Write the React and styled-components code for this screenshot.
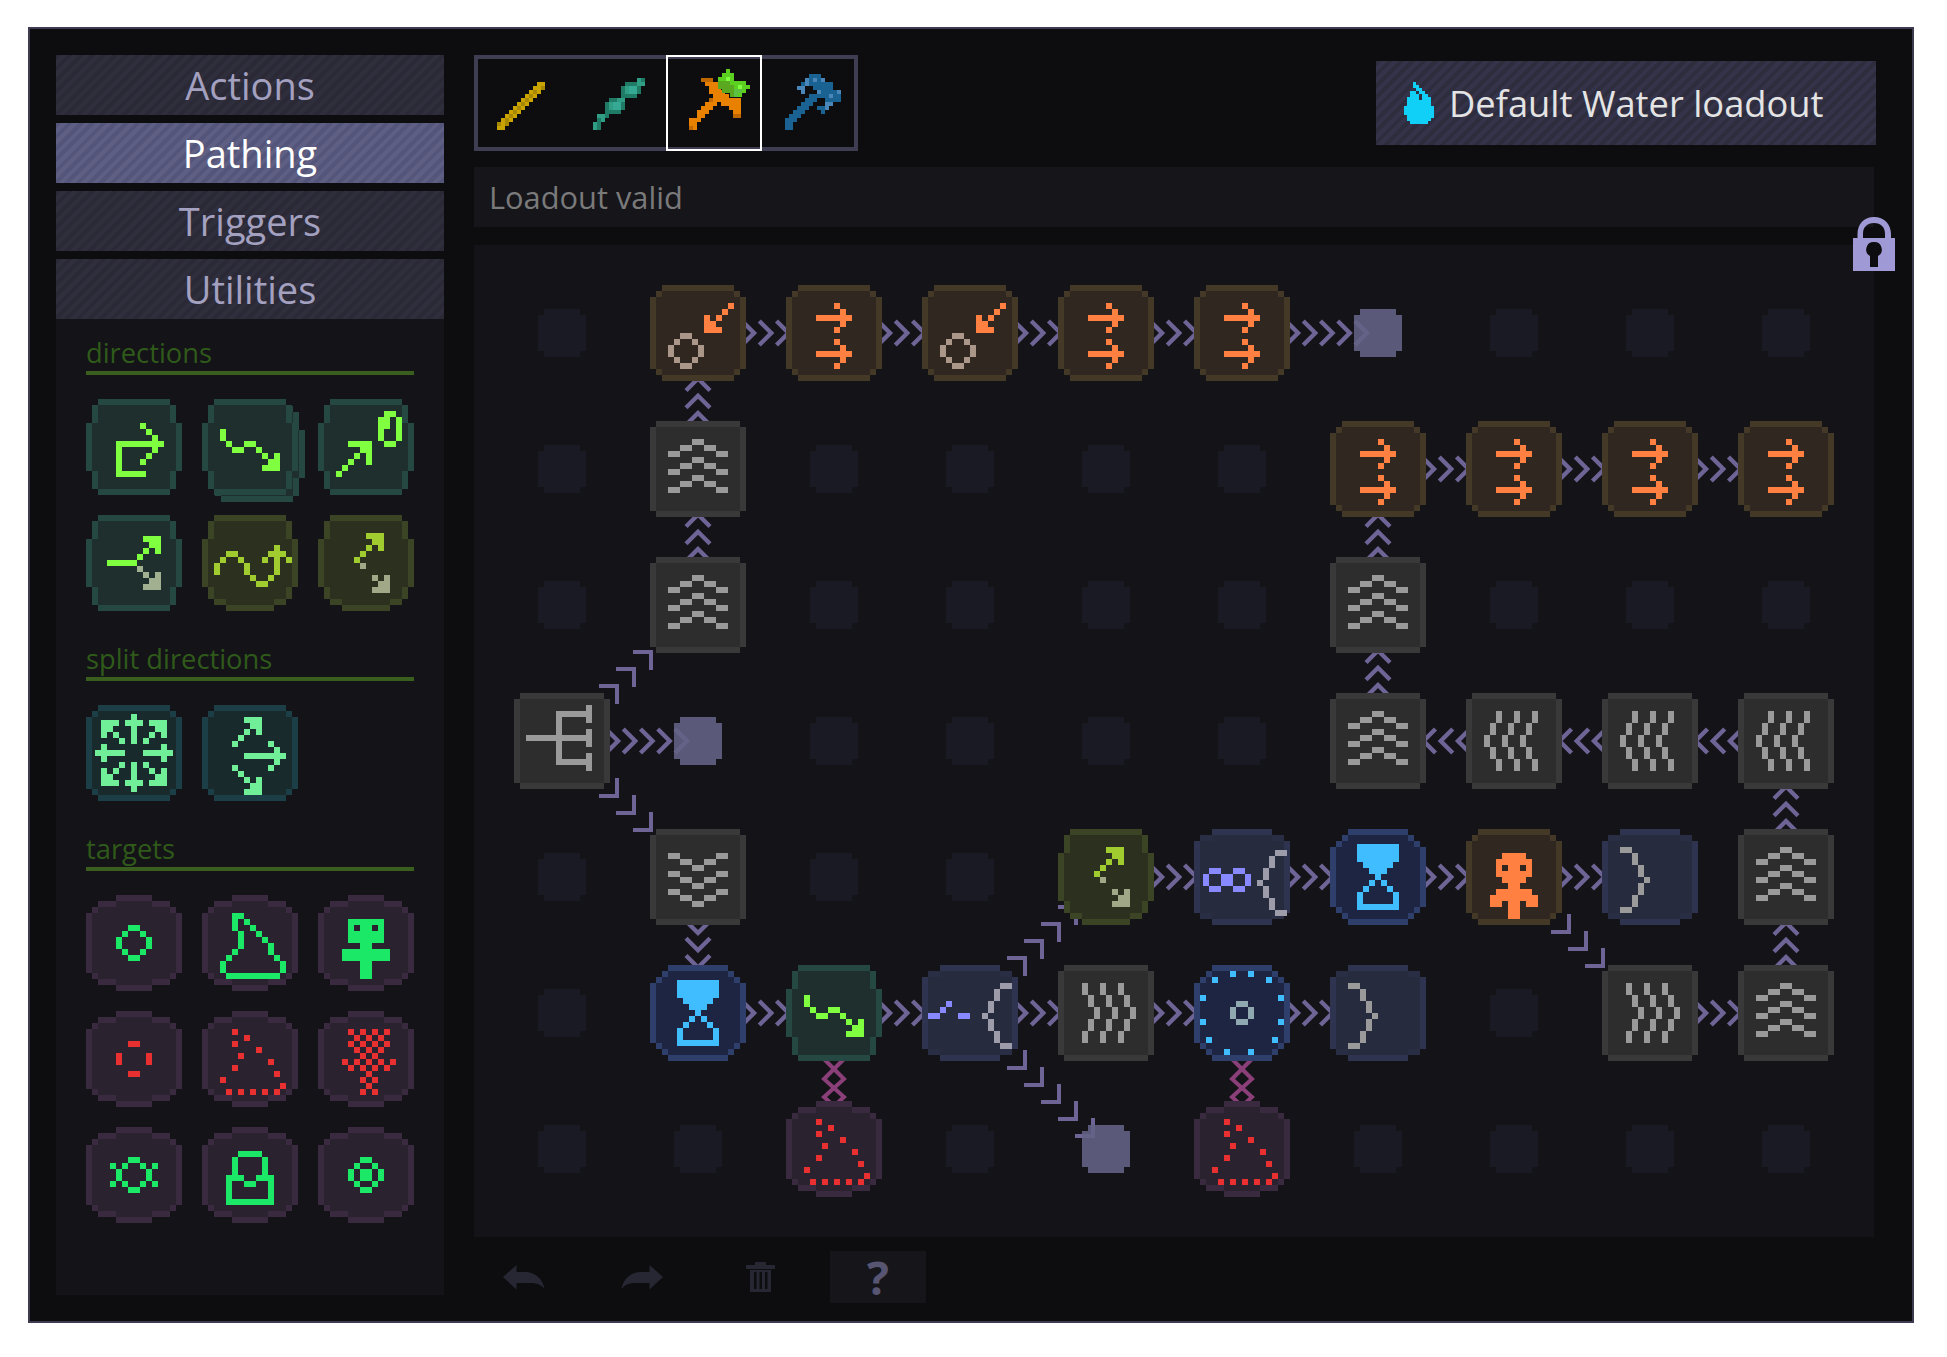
import React from "react";
import styled, { createGlobalStyle } from "styled-components";

const GlobalStyle = createGlobalStyle`
  html, body { margin: 0; background: #fff; }
  #root { padding: 27px 0 0 28px; font-family: "Open Sans", "Noto Sans", sans-serif; }
`;

const rep = (row, n) => Array(n).fill(row);

/* ---------- frames, all on a 16x16 grid at 6px ---------- */
const FRAMES = {
  square: [".oooooooooooooo.", ...rep("offffffffffffffo", 14), ".oooooooooooooo."],
  rounded: [
    "..oooooooooooo..",
    ".offffffffffffo.",
    ...rep("offffffffffffffo", 12),
    ".offffffffffffo.",
    "..oooooooooooo..",
  ],
  chamfer: [
    "..oooooooooooo..",
    ...rep(".offffffffffffo.", 3),
    ...rep("offffffffffffffo", 8),
    ...rep(".offffffffffffo.", 3),
    "..oooooooooooo..",
  ],
  olive: [
    "..oooooooooooo..",
    ...rep(".offffffffffffo.", 3),
    ...rep("offffffffffffffo", 8),
    ...rep(".offffffffffffo.", 2),
    "..ooffffffffoo..",
    "....oooooooo....",
  ],
  octagon: [
    "...oooooooooo...",
    "..offffffffffo..",
    ".offffffffffffo.",
    ...rep("offffffffffffffo", 10),
    ".offffffffffffo.",
    "..offffffffffo..",
    "...oooooooooo...",
  ],
  slate: [
    "...oooooooooo...",
    ".mmffffffffffmm.",
    ...rep("offffffffffffffo", 12),
    ".mmffffffffffmm.",
    "...oooooooooo...",
  ],
  disc: [
    ".....oooooo.....",
    "..oooffffffooo..",
    ".offffffffffffo.",
    ...rep("offffffffffffffo", 10),
    ".offffffffffffo.",
    "..oooffffffooo..",
    ".....oooooo.....",
  ],
};

const TONES = {
  grey: { o: "#393939", f: "#2d2d2d" },
  orange: { o: "#443826", f: "#302820" },
  green: { o: "#264842", f: "#1f2f2e" },
  olive: { o: "#3c4426", f: "#2c301e" },
  slate: { o: "#2e3450", f: "#272b3e", m: "#2a2e45" },
  blue: { o: "#2e3f6b", f: "#1e2542" },
  teal: { o: "#1c3f47", f: "#182a2c" },
  plum: { o: "#392a40", f: "#2a222e" },
};

/* ---------- glyphs ---------- */
const arrows = ["...#..", "....#.", "######", "....#.", "...#.."];
const chevUp = rep(["....##....", "..##..##..", "##......##"], 3).flat();
const chevRight = [
  "#..#..#..", "#..#..#..", ".#..#..#.", ".#..#..#.", "..#..#..#", "..#..#..#",
  ".#..#..#.", ".#..#..#.", "#..#..#..", "#..#..#..",
];
const flipH = (rows) => rows.map((r) => r.split("").reverse().join(""));
const bracketOpen = [
  "...##", "..#..", "..#..", ".#...", ".#...", "#....", ".#...", ".#...", "..#..", "..#..", "...##",
];
const ring = ["..##..", ".#..#.", "#....#", "#....#", ".#..#.", "..##.."];

const GRAY = "#9a9a9a";
const ORANGE = "#ff8040";
const LIME = "#80ff40";
const YELLOW = "#a0cc30";
const SKY = "#40bdff";
const MINT = "#70ee98";
const GREEN = "#1ce868";
const RED = "#e83030";
const VIOLET = "#8888ff";

const waveLayer = {
  x: 3, y: 5,
  rows: ["#.........", "#.........", ".#..##....", "..##..#...", ".......#.#", "........##", ".......###"],
};
const forkArrowsLayer = {
  x: 6, y: 3,
  rows: ["..###.", "...##.", "..#.#.", ".#....", "#.....", ".+....", "......", "...+.+", "....++", "...+++"],
};
const hourglassLayer = {
  x: 4.5, y: 2.5,
  rows: ["#######", "#######", "#######", ".#####.", "..###..", "...#...", "..#.#..", ".#...#.", "#.....#", "#.....#", "#######"],
};

const SPRITES = {
  double: { frame: "rounded", tone: "orange", ink: ORANGE, layers: [{ x: 5, y: 3, rows: [...arrows, "......", ...arrows] }] },
  shoot: {
    frame: "rounded", tone: "orange", ink: ORANGE, muted: "#ab978a",
    layers: [{
      x: 3, y: 3,
      rows: ["..........#", ".........#.", "......#.#..", "......##...", "......###..", "..++.......", ".+..+......", "+....+.....", "+....+.....", ".+..+......", "..++......."],
    }],
  },
  up: { frame: "square", tone: "grey", ink: GRAY, layers: [{ x: 3, y: 3, rows: chevUp }] },
  down: { frame: "square", tone: "grey", ink: GRAY, layers: [{ x: 3, y: 4, rows: [...chevUp].reverse() }] },
  right: { frame: "square", tone: "grey", ink: GRAY, layers: [{ x: 4, y: 3, rows: chevRight }] },
  left: { frame: "square", tone: "grey", ink: GRAY, layers: [{ x: 3, y: 3, rows: flipH(chevRight) }] },
  fork: {
    frame: "square", tone: "grey", ink: GRAY,
    layers: [{
      x: 2, y: 2,
      rows: ["..........#", ".....######", ".....#....#", ".....#.....", ".....#....#", "###########", ".....#....#", ".....#.....", ".....#....#", ".....######", "..........#"],
    }],
  },
  hourglass: { frame: "octagon", tone: "blue", ink: SKY, layers: [hourglassLayer] },
  wave: { frame: "chamfer", tone: "green", ink: LIME, layers: [waveLayer] },
  boxArrow: {
    frame: "chamfer", tone: "green", ink: LIME,
    layers: [{ x: 5, y: 4, rows: ["....#...", ".....#..", "......#.", "########", "#.....#.", "#....#..", "#...#...", "#.......", "#####..."] }],
  },
  arrowZero: {
    frame: "chamfer", tone: "green", ink: LIME,
    layers: [{
      x: 3, y: 2,
      rows: ["........##.", ".......##.#", ".......##.#", ".......#..#", ".......#..#", "..####..##.", "....##.....", "...#.#.....", "..#..#.....", ".#.........", "#.........."],
    }],
  },
  splitArrow: {
    frame: "chamfer", tone: "green", ink: LIME, muted: "#a0b090",
    layers: [{ x: 3.5, y: 3.5, rows: ["......###", ".......##", "......#.#", ".....#...", "#####....", ".....+...", "......+.+", ".......++", "......+++"] }],
  },
  waveUp: {
    frame: "olive", tone: "olive", ink: YELLOW,
    layers: [{
      x: 2, y: 5,
      rows: ["..........#..", "..##.....###.", ".#..#...#.#.#", "#....#....#..", "#....#....#..", "......#..#...", ".......##...."],
    }],
  },
  forkArrows: { frame: "olive", tone: "olive", ink: YELLOW, muted: "#a0a888", layers: [forkArrowsLayer] },
  compass: {
    frame: "rounded", tone: "teal", ink: MINT,
    layers: [{
      x: 1.5, y: 1.5,
      rows: ["......#......", ".###.###.###.", ".##...#...##.", ".#.#..#..#.#.", "....#.#.#....", ".#.........#.", "#####...#####", ".#.........#.", "....#.#.#....", ".#.#..#..#.#.", ".##...#...##.", ".###.###.###.", "......#......"],
    }],
  },
  fan: {
    frame: "rounded", tone: "teal", ink: MINT,
    layers: [{
      x: 5, y: 2,
      rows: ["..###....", "...##....", "..#.#....", ".#.......", "#.....#..", ".......#.", "..#######", ".......#.", "#.....#..", ".#.......", "..#.#....", "...##....", "..###...."],
    }],
  },
  circle: { frame: "disc", tone: "plum", ink: GREEN, layers: [{ x: 5, y: 5, rows: ring }] },
  triangle: {
    frame: "disc", tone: "plum", ink: GREEN,
    layers: [{
      x: 3, y: 3,
      rows: ["..##.......", "..#.#......", "..#..#.....", "...#..#....", "...#...#...", "...#....#..", "..#.....#..", ".#.......#.", "#.........#", "#.........#", ".#########."],
    }],
  },
  figure: {
    frame: "disc", tone: "plum", ink: GREEN,
    layers: [{ x: 4, y: 4, rows: [".######.", ".#.##.#.", ".######.", ".######.", "...##...", "########", "########", "...##...", "...##...", "...##..."] }],
  },
  dashCircle: { frame: "disc", tone: "plum", ink: RED, layers: [{ x: 5, y: 5, rows: ["..##..", "......", "#....#", "#....#", "......", "..##.."] }] },
  dotTriangle: {
    frame: "disc", tone: "plum", ink: RED,
    layers: [{
      x: 3, y: 3,
      rows: ["..#........", "....#......", "..#........", "......#....", "...#.......", "........#..", "..#........", ".........#.", "#..........", "..........#", ".#.#.#.#.#."],
    }],
  },
  checker: {
    frame: "disc", tone: "plum", ink: RED,
    layers: [{
      x: 4, y: 3,
      rows: [".#.#.#.#.", "..#.#.#..", ".#.#.#.#.", "..#.#.#..", "...#.#...", "#.#.#.#.#", ".#.#.#.#.", "....#....", "...#.#...", "....#....", "...#.#..."],
    }],
  },
  sun: { frame: "disc", tone: "plum", ink: GREEN, layers: [{ x: 4, y: 5, rows: ["...##...", "#.#..#.#", ".#....#.", ".#....#.", "#.#..#.#", "...##..."] }] },
  bag: {
    frame: "disc", tone: "plum", ink: GREEN,
    layers: [{ x: 4, y: 4, rows: ["..####..", ".#....#.", ".#....#.", ".#....#.", "###..###", "#..##..#", "#......#", "#......#", "########"] }],
  },
  core: { frame: "disc", tone: "plum", ink: GREEN, layers: [{ x: 5, y: 5, rows: ["..##..", ".#..#.", "#.##.#", "#.##.#", ".#..#.", "..##.."] }] },
  person: {
    frame: "rounded", tone: "orange", ink: ORANGE,
    layers: [{
      x: 4, y: 4,
      rows: ["..####..", ".######.", ".#.##.#.", ".######.", "..####..", "...##...", ".######.", "########", "##.##.##", "...##...", "...##..."],
    }],
  },
  loop: {
    frame: "slate", tone: "slate", ink: VIOLET, muted: "#9c9cab",
    layers: [
      { x: 1.5, y: 6.5, rows: [".##..##.", "#..##..#", "#..##..#", ".##..##."] },
      { x: 10.5, y: 3.5, rows: bracketOpen.map((r) => r.replaceAll("#", "+")) },
    ],
  },
  dash: {
    frame: "slate", tone: "slate", ink: VIOLET, muted: "#9c9cab",
    layers: [
      { x: 1, y: 6, rows: ["...#...", "..#....", "##...##"] },
      { x: 10, y: 3, rows: bracketOpen.map((r) => r.replaceAll("#", "+")) },
    ],
  },
  close: {
    frame: "slate", tone: "slate", ink: GRAY,
    layers: [{ x: 3, y: 3, rows: flipH(bracketOpen) }],
  },
  sparks: {
    frame: "octagon", tone: "blue", ink: SKY, muted: "#90a8b0",
    layers: [{
      x: 0, y: 1,
      rows: ["......#..#......", "...#........#...", "", "", ".#............#.", ".......++.......", "......+..+......", "......+..+......", ".#.....++.....#.", "", "", "..#..........#..", "", ".....#...#......"],
    }],
  },
};

/* ---------- board ---------- */
const BOARD = [
  ["dot", "shoot", "double", "shoot", "double", "double", "port", "dot", "dot", "dot"],
  ["dot", "up", "dot", "dot", "dot", "dot", "double", "double", "double", "double"],
  ["dot", "up", "dot", "dot", "dot", "dot", "up", "dot", "dot", "dot"],
  ["fork", "port", "dot", "dot", "dot", "dot", "up", "left", "left", "left"],
  ["dot", "down", "dot", "dot", "forkArrows", "loop", "hourglass", "person", "close", "up"],
  ["dot", "hourglass", "wave", "dash", "right", "sparks", "close", "dot", "right", "up"],
  ["dot", "dot", "dotTriangle", "dot", "port", "dotTriangle", "dot", "dot", "dot", "dot"],
];

const LINKS = {
  "1,0": ["right"], "2,0": ["right"], "3,0": ["right"], "4,0": ["right"], "5,0": ["right"],
  "1,1": ["up"], "6,1": ["right"], "7,1": ["right"], "8,1": ["right"],
  "1,2": ["up"], "6,2": ["up"],
  "0,3": ["right", "ne", "se"], "6,3": ["up"], "7,3": ["left"], "8,3": ["left"], "9,3": ["left"],
  "1,4": ["down"], "4,4": ["right"], "5,4": ["right"], "6,4": ["right"], "7,4": ["right", "se"], "9,4": ["up"],
  "1,5": ["right"], "2,5": ["right", "braid"], "3,5": ["right", "ne", "se"], "4,5": ["right"], "5,5": ["right", "braid"], "8,5": ["right"], "9,5": ["up"],
};

const ROTATION = { right: 0, down: 90, left: 180, up: 270 };

/* ---------- tools ---------- */
const TOOL_COLORS = {
  a: "#c9a400", b: "#a88800",
  t: "#1f7a66", u: "#2f9e85", v: "#35a993",
  o: "#e88000", d: "#c06800",
  g: "#5cd020", m: "#5aa820", k: "#5cc040", l: "#80ff40",
  p: "#1a6292", q: "#4a86b8", r: "#14527e",
};
const TOOLS = [
  [{
    x: 5.75, y: 6.75,
    rows: ["..........aa", ".........aab", "........aba.", ".......aba..", "......aba...", ".....aba....", "....aba.....", "...aba......", "..aba.......", ".aba........", "bab.........", "aa.........."],
  }],
  [{
    x: 5.75, y: 5.75,
    rows: ["...........ut", "........tttuu", ".......tuvvt.", ".......tuvvt.", ".......tttt..", "....ttuu.....", "...tuvvt.....", "...tuvvt.....", "...tttt......", ".uut.........", ".tu..........", "ut...........", "ut..........."],
  }],
  [
    {
      x: 5.75, y: 5.75,
      rows: ["...ddd........", "....oooo......", ".....ooo......", ".....oooo.....", "......oooo....", ".....dooooooo.", "....ooo.ooooo.", "...ooo....ooo.", "..ooo......oo.", "..oo.......dd.", "ooo...........", "oo............", "do............"],
    },
    {
      x: 13, y: 3.5,
      rows: ["..g.....", ".ggg....", "gglg....", "mmmgggg.", "mmmmglgg", ".mmmkkg.", "...mkg.."],
    },
  ],
  [{
    x: 5.75, y: 4.75,
    rows: ["......ppp.....", ".....qpqpq....", "....pqpppppp..", "...qq..ppppp..", "....q...qppppq", "......pppppqpp", ".....ppp..pppp", "....ppp...qq..", "...ppp..ppq...", "..ppp....p....", ".ppp..........", "ppp...........", "pp............", "pp............"],
  }],
];

const FLAME = [
  "...#......", "...##.....", "....##....", "..##.##...", "..###.##..", ".####.###.", ".########.",
  ".########.", "##########", "##########", "##########", ".#########", ".########.", "..######..",
];

/* ---------- styled parts ---------- */
const Window = styled.div`
  box-sizing: border-box;
  width: 1886px;
  height: 1296px;
  border: 2px solid #3d3b4f;
  background: #0d0d0f;
  padding: 26px 0 18px 26px;
  display: flex;
  gap: 30px;
`;

const Sidebar = styled.aside`
  width: 388px;
  margin-bottom: 8px;
  display: flex;
  flex-direction: column;
`;

const stripes = (a, b) => `repeating-linear-gradient(135deg, ${a} 0 4px, ${b} 4px 8px)`;

const TabButton = styled.div`
  height: 60px;
  margin-bottom: 8px;
  display: flex;
  align-items: center;
  justify-content: center;
  font-size: 38px;
  color: ${(p) => (p.$active ? "#ffffff" : "#a3a0c0")};
  background: ${(p) => (p.$active ? stripes("#54557a", "#5e5f83") : stripes("#2a2935", "#2f2e3c"))};
`;

const Palette = styled.div`
  flex: 1;
  margin-top: -8px;
  padding: 0 30px;
  background: #141318;
`;

const SectionTitle = styled.div`
  box-sizing: border-box;
  height: 56px;
  display: flex;
  align-items: flex-end;
  padding-bottom: 1px;
  border-bottom: 4px solid #3a5e1e;
  font-size: 27.3px;
  line-height: 34px;
  color: #2f5a1a;
`;

const IconGrid = styled.div`
  display: grid;
  grid-template-columns: repeat(3, 96px);
  gap: 20px;
  margin: 24px 0 14px;
`;

const NodeBox = styled.div`
  position: relative;
  z-index: 2;
  width: 96px;
  height: 96px;
`;

const SpriteSvg = styled.svg`
  display: block;
  position: relative;
  width: 96px;
  height: 96px;
`;

const GhostSvg = styled(SpriteSvg)`
  position: absolute;
  left: 7px;
  top: 7px;
`;

const Main = styled.main`
  width: 1400px;
  position: relative;
  display: flex;
  flex-direction: column;
`;

const TopRow = styled.div`
  display: flex;
  align-items: center;
  justify-content: space-between;
  height: 96px;
  margin-right: -2px;
`;

const ToolStrip = styled.div`
  display: flex;
  box-shadow: inset 0 0 0 4px #3f3d52;
`;

const ToolCell = styled.div`
  box-sizing: border-box;
  width: 96px;
  height: 96px;
  border: 2px solid ${(p) => (p.$selected ? "#ffffff" : "transparent")};
`;

const ToolSvg = styled.svg`
  display: block;
  width: 96px;
  height: 96px;
  margin: -2px;
`;

const NamePlate = styled.div`
  box-sizing: border-box;
  width: 500px;
  height: 84px;
  padding-left: 28px;
  display: flex;
  align-items: center;
  gap: 15px;
  font-size: 36.3px;
  color: #e4e4e4;
  background: ${stripes("#2e2d3e", "#343349")};
`;

const FlameSvg = styled.svg`
  width: 30px;
  height: 42px;
`;

const StatusBar = styled.div`
  height: 60px;
  margin-top: 16px;
  padding-left: 15px;
  display: flex;
  align-items: center;
  font-size: 30.8px;
  color: #7a7a7a;
  background: #15151a;
`;

const Board = styled.div`
  margin-top: 18px;
  padding: 20px;
  background: #141318;
  display: grid;
  grid-template-columns: repeat(10, 136px);
  grid-auto-rows: 136px;
`;

const Cell = styled.div`
  position: relative;
  display: flex;
  align-items: center;
  justify-content: center;
`;

const Dot = styled.div`
  position: relative;
  z-index: ${(p) => (p.$port ? 2 : 0)};
  width: 48px;
  height: 48px;
  background: ${(p) => (p.$port ? "rgba(99, 98, 133, 0.9)" : "#1a1a24")};
  clip-path: polygon(6px 0, 42px 0, 42px 6px, 48px 6px, 48px 42px, 42px 42px, 42px 48px, 6px 48px, 6px 42px, 0 42px, 0 6px, 6px 6px);
`;

const LinkSvg = styled.svg`
  position: absolute;
  left: 50%;
  top: 50%;
  width: 320px;
  height: 320px;
  margin: -160px 0 0 -160px;
  z-index: 1;
  overflow: visible;
  pointer-events: none;
  fill: none;
  stroke: ${(p) => (p.$braid ? "#8a3f78" : "#6e6495")};
  stroke-width: ${(p) => (p.$diag || p.$braid ? 4 : 4.4)}px;
`;

const LockBadge = styled.svg`
  position: absolute;
  top: 162px;
  right: -21px;
  width: 42px;
  height: 54px;
  z-index: 3;
`;

const Footer = styled.div`
  margin-top: 14px;
  padding-left: 2px;
  display: flex;
  gap: 22px;
`;

const FooterButton = styled.div`
  width: 96px;
  height: 52px;
  display: flex;
  align-items: center;
  justify-content: center;
  color: #272633;
  background: ${(p) => (p.$filled ? "#15151a" : "transparent")};
`;

const HelpMark = styled.span`
  font-family: "Open Sans", sans-serif;
  font-size: 46px;
  font-weight: 700;
  line-height: 52px;
  color: #575572;
`;

const ArrowSvg = styled.svg`
  width: 42px;
  height: 25px;
  transform: ${(p) => (p.$flip ? "scaleX(-1)" : "none")};
`;

const TrashSvg = styled.svg`
  width: 29px;
  height: 30px;
`;

/* ---------- small components ---------- */
const Pixels = ({ rows, palette, x = 0, y = 0 }) =>
  rows.flatMap((row, r) => {
    const out = [];
    let c = 0;
    while (c < row.length) {
      const ch = row[c];
      if (!palette[ch]) {
        c++;
        continue;
      }
      let e = c;
      while (row[e] === ch) e++;
      out.push(<rect key={`${x}-${y}-${r}-${c}`} x={x + c} y={y + r} width={e - c} height={1} fill={palette[ch]} />);
      c = e;
    }
    return out;
  });

const Sprite = ({ name, ghost }) => {
  const s = SPRITES[name];
  const palette = { ...TONES[s.tone], "#": s.ink, "+": s.muted };
  return (
    <NodeBox>
      {ghost && (
        <GhostSvg viewBox="0 0 16 16" shapeRendering="crispEdges">
          <Pixels rows={FRAMES[s.frame]} palette={TONES[s.tone]} />
        </GhostSvg>
      )}
      <SpriteSvg viewBox="0 0 16 16" shapeRendering="crispEdges">
        <Pixels rows={FRAMES[s.frame]} palette={palette} />
        {s.layers.map((l, i) => (
          <Pixels key={i} {...l} palette={{ "#": s.ink, "+": s.muted }} />
        ))}
      </SpriteSvg>
    </NodeBox>
  );
};

const STEPS = [0, 1, 2, 3, 4];

const Link = ({ dir }) => {
  if (dir === "braid") {
    return (
      <LinkSvg $braid viewBox="-160 -160 320 320">
        <polyline points="-10,46 10,66 -10,84 10,102" />
        <polyline points="10,46 -10,66 10,84 -10,102" />
      </LinkSvg>
    );
  }
  if (dir === "ne" || dir === "se") {
    return (
      <LinkSvg $diag viewBox="-160 -160 320 320">
        <g transform={dir === "ne" ? "scale(1,-1)" : undefined}>
          {STEPS.map((k) => {
            const c = 55 + 17 * k;
            return <polyline key={k} points={`${c - 18},${c} ${c},${c} ${c},${c - 18}`} />;
          })}
        </g>
      </LinkSvg>
    );
  }
  return (
    <LinkSvg viewBox="-160 -160 320 320">
      <g transform={`rotate(${ROTATION[dir]})`}>
        {STEPS.map((k) => {
          const t = 56 + 17.25 * k;
          return <polyline key={k} points={`${t - 12},-12 ${t},0 ${t - 12},12`} />;
        })}
      </g>
    </LinkSvg>
  );
};

const Section = ({ title, icons }) => (
  <>
    <SectionTitle>{title}</SectionTitle>
    <IconGrid>
      {icons.map((name) => (
        <Sprite key={name} name={name} ghost={name === "wave"} />
      ))}
    </IconGrid>
  </>
);

const App = () => (
  <>
    <GlobalStyle />
    <Window>
      <Sidebar>
        <TabButton>Actions</TabButton>
        <TabButton $active>Pathing</TabButton>
        <TabButton>Triggers</TabButton>
        <TabButton>Utilities</TabButton>
        <Palette>
          <Section title="directions" icons={["boxArrow", "wave", "arrowZero", "splitArrow", "waveUp", "forkArrows"]} />
          <Section title="split directions" icons={["compass", "fan"]} />
          <Section
            title="targets"
            icons={["circle", "triangle", "figure", "dashCircle", "dotTriangle", "checker", "sun", "bag", "core"]}
          />
        </Palette>
      </Sidebar>

      <Main>
        <TopRow>
          <ToolStrip>
            {TOOLS.map((layers, i) => (
              <ToolCell key={i} $selected={i === 2}>
                <ToolSvg viewBox="0 0 24 24" shapeRendering="crispEdges">
                  {layers.map((l, j) => (
                    <Pixels key={j} {...l} palette={TOOL_COLORS} />
                  ))}
                </ToolSvg>
              </ToolCell>
            ))}
          </ToolStrip>
          <NamePlate>
            <FlameSvg viewBox="0 0 10 14" shapeRendering="crispEdges">
              <Pixels rows={FLAME} palette={{ "#": "#10d0f8" }} />
            </FlameSvg>
            Default Water loadout
          </NamePlate>
        </TopRow>

        <StatusBar>Loadout valid</StatusBar>

        <LockBadge viewBox="0 0 42 54">
          <path
            fill="#9f9ad6"
            d="M4.5 22V17C4.5 7 11 0 21 0s17 7 17 17v5h-6v-5c0-7-4-11-11-11s-11 4-11 11v5zM0 21h42v33H0z"
          />
          <path fill="#0d0d0f" d="M21 25a7.5 7.5 0 0 1 4 14v11h-8V39a7.5 7.5 0 0 1 4-14z" />
        </LockBadge>

        <Board>
          {BOARD.flatMap((row, r) =>
            row.map((name, c) => (
              <Cell key={`${c},${r}`}>
                {(LINKS[`${c},${r}`] || []).map((dir) => (
                  <Link key={dir} dir={dir} />
                ))}
                {name === "dot" || name === "port" ? <Dot $port={name === "port"} /> : <Sprite name={name} />}
              </Cell>
            ))
          )}
        </Board>

        <Footer>
          <FooterButton>
            <ArrowSvg viewBox="0 0 42 25" fill="currentColor">
              <path d="M0 12 13.5 0v7H22c10 0 18 7 19.5 17C36 17 30 18 22 18h-8.500v6.500z" />
            </ArrowSvg>
          </FooterButton>
          <FooterButton>
            <ArrowSvg $flip viewBox="0 0 42 25" fill="currentColor">
              <path d="M0 12 13.5 0v7H22c10 0 18 7 19.5 17C36 17 30 18 22 18h-8.500v6.500z" />
            </ArrowSvg>
          </FooterButton>
          <FooterButton>
            <TrashSvg viewBox="0 0 29 30" fill="currentColor">
              <path d="M9 0h11v3h8a1.500 1.500 0 0 1 0 4H1a1.500 1.500 0 0 1 0-4h8zM4 8h21v22H4zM8 10v17h2.500V10zm5.500 0v17H16V10zm5.500 0v17h2.500V10z" fillRule="evenodd" />
            </TrashSvg>
          </FooterButton>
          <FooterButton $filled>
            <HelpMark>?</HelpMark>
          </FooterButton>
        </Footer>
      </Main>
    </Window>
  </>
);

export default App;
